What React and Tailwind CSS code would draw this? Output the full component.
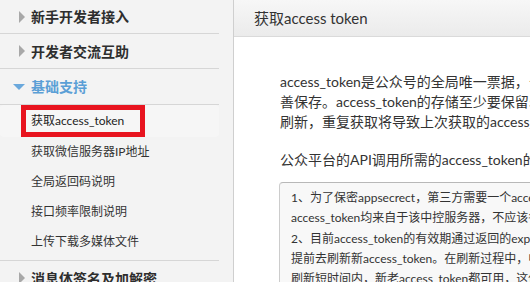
import React from "react";

const FONT = { fontFamily: 'Lato, "Noto Sans CJK SC", sans-serif' };

const topItems = [
  { label: "新手开发者接入", h: "h-[34px]" },
  { label: "开发者交流互助", h: "h-[35px]" },
];

const subItems = [
  "获取微信服务器IP地址",
  "全局返回码说明",
  "接口频率限制说明",
  "上传下载多媒体文件",
];

// 右向灰色三角
function ArrowRight() {
  return (
    <span className="w-0 h-0 border-y-[6px] border-y-transparent border-l-[6px] border-l-[#a8a8a8] mr-[6px] ml-[19px]" />
  );
}

// 下向蓝色三角
function ArrowDown() {
  return (
    <span className="w-0 h-0 border-x-[6px] border-x-transparent border-t-[6px] border-t-[#6aa8dc] mr-[6px] ml-[13px]" />
  );
}

function Sidebar() {
  return (
    <div className="w-[234px] shrink-0 bg-[#f3f3f3] border-r border-[#cfcfcf] h-full overflow-hidden">
      <div className="w-[219px]">
        {topItems.map((it) => (
          <div
            key={it.label}
            className={`${it.h} flex items-center border-b border-[#d6d6d6]`}
          >
            <ArrowRight />
            <span className="text-[14px] font-bold text-[#2e2e2e]">{it.label}</span>
          </div>
        ))}

        <div className="h-[36px] flex items-center border-b border-[#d6d6d6]">
          <ArrowDown />
          <span className="text-[14px] font-bold text-[#5b9fd6]">基础支持</span>
        </div>

        <div className="pb-[3px] border-b border-[#d6d6d6]">
          <div className="h-[32px] bg-[#f6f6f6] rounded-sm">
            <div className="ml-[21px] w-[124px] h-[32px] border-[5px] border-[#e8141f] pl-[5px] flex items-center text-[12px] text-[#222]">
              获取access_token
            </div>
          </div>
          {subItems.map((s) => (
            <div key={s} className="h-[30px] flex items-center pl-[31px] text-[12px] text-[#333]">
              {s}
            </div>
          ))}
        </div>

        <div className="h-[35px] flex items-center border-b border-[#d6d6d6]">
          <ArrowRight />
          <span className="text-[14px] font-bold text-[#2e2e2e]">消息体签名及加解密</span>
        </div>
      </div>
    </div>
  );
}

const para1 = [
  "access_token是公众号的全局唯一票据，公众号调用各接口时都需使用access_token。开发者需要进行妥",
  "善保存。access_token的存储至少要保留512个字符空间。access_token的有效期目前为2个小时，需定时",
  "刷新，重复获取将导致上次获取的access_token失效。",
];

const boxLines = [
  "1、为了保密appsecrect，第三方需要一个access_token获取和刷新的中控服务器。而其他业务逻辑服务器所使用的",
  "access_token均来自于该中控服务器，不应该各自去刷新，否则会造成access_token覆盖而影响业务；",
  "2、目前access_token的有效期通过返回的expire_in来传达，目前是7200秒之内的值。中控服务器需要根据这个有效时间",
  "提前去刷新新access_token。在刷新过程中，中控服务器对外输出的依然是老access_token，此时公众平台后台会保证在",
  "刷新短时间内，新老access_token都可用，这保证了第三方业务的平滑过渡；",
];

function Main() {
  return (
    <div className="flex-1 min-w-0 h-full overflow-hidden bg-white">
      <div className="h-[37px] flex items-center pl-[20px] border-b border-[#dadada] bg-gradient-to-b from-[#f7f7f7] to-[#ebebeb]">
        <span className="text-[15px] text-[#333] whitespace-nowrap">获取access token</span>
      </div>

      <div className="pl-[45px] pt-[35px]">
        <div className="pl-px text-[14px] leading-[20px] text-[#333]">
          {para1.map((l) => (
            <div key={l} className="whitespace-nowrap">{l}</div>
          ))}
        </div>

        <div className="pl-px mt-[18px] text-[14px] leading-[20px] text-[#333] whitespace-nowrap">
          公众平台的API调用所需的access_token的使用及生成方式说明：
        </div>

        <div className="mt-[12px] w-[720px] border border-[#cccccc] border-t-[#b8b8b8] rounded-sm bg-[#f8f8f8] px-[11px] pt-[5px] pb-[6px] text-[12px] leading-[20.3px] text-[#333]">
          {boxLines.map((l) => (
            <div key={l} className="whitespace-nowrap">{l}</div>
          ))}
        </div>
      </div>
    </div>
  );
}

export default function App() {
  return (
    <div className="w-[530px] h-[282px] flex overflow-hidden" style={FONT}>
      <Sidebar />
      <Main />
    </div>
  );
}
